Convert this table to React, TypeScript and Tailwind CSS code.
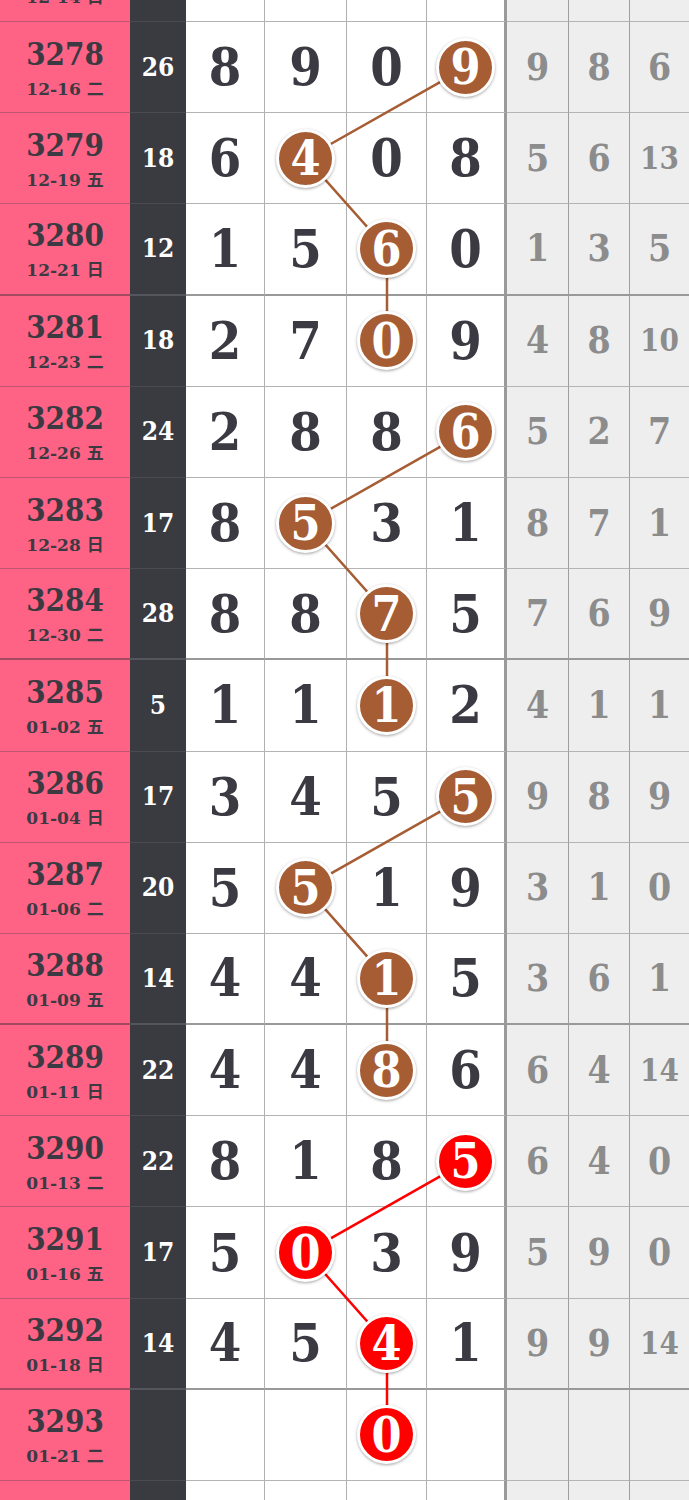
import React from "react";

type Row = {
  no: string;
  date: string;
  sum: string;
  d: string[];
  ball: number;
  red: boolean;
  g: string[];
};

const raw: [string, string, string, string, number, boolean, string][] = [
  ["", "12-14 日", "", "   ", -1, false, "  "],
  ["3278", "12-16 二", "26", "8 9 0 9", 3, false, "9 8 6"],
  ["3279", "12-19 五", "18", "6 4 0 8", 1, false, "5 6 13"],
  ["3280", "12-21 日", "12", "1 5 6 0", 2, false, "1 3 5"],
  ["3281", "12-23 二", "18", "2 7 0 9", 2, false, "4 8 10"],
  ["3282", "12-26 五", "24", "2 8 8 6", 3, false, "5 2 7"],
  ["3283", "12-28 日", "17", "8 5 3 1", 1, false, "8 7 1"],
  ["3284", "12-30 二", "28", "8 8 7 5", 2, false, "7 6 9"],
  ["3285", "01-02 五", "5", "1 1 1 2", 2, false, "4 1 1"],
  ["3286", "01-04 日", "17", "3 4 5 5", 3, false, "9 8 9"],
  ["3287", "01-06 二", "20", "5 5 1 9", 1, false, "3 1 0"],
  ["3288", "01-09 五", "14", "4 4 1 5", 2, false, "3 6 1"],
  ["3289", "01-11 日", "22", "4 4 8 6", 2, false, "6 4 14"],
  ["3290", "01-13 二", "22", "8 1 8 5", 3, true, "6 4 0"],
  ["3291", "01-16 五", "17", "5 0 3 9", 1, true, "5 9 0"],
  ["3292", "01-18 日", "14", "4 5 4 1", 2, true, "9 9 14"],
  ["3293", "01-21 二", "", "  0 ", 2, true, "  "],
  ["", "", "", "   ", -1, false, "  "],
];

const rows: Row[] = raw.map(([no, date, sum, d, ball, red, g]) => ({
  no,
  date,
  sum,
  d: d.split(" "),
  ball,
  red,
  g: g.split(" "),
}));

const R = 91.2;
const colCenters = [225.5, 306, 387, 467];
const serif = { fontFamily: '"DejaVu Serif", "Liberation Serif", serif', fontStretch: "condensed" as const };
const cjk = { fontFamily: '"DejaVu Serif", "Noto Sans CJK SC", serif' };

const digitWidths = ["w-[79px]", "w-[82px]", "w-[80px]", "w-[80px]"];
const grayWidths = ["w-[62px]", "w-[61px]", "w-[59px]"];

function Ball({ v, red }: { v: string; red: boolean }) {
  return (
    <span
      className={
        red
          ? "relative z-10 flex h-[59px] w-[59px] items-center justify-center rounded-full border-[3px] border-white bg-[#ff0000] text-[48px] font-bold leading-none text-white shadow-[0_1px_3px_rgba(0,0,0,0.35)]"
          : "relative z-10 flex h-[59px] w-[59px] items-center justify-center rounded-full border-[3px] border-white bg-[#a65d34] text-[48px] font-bold leading-none text-white shadow-[0_1px_3px_rgba(0,0,0,0.35)]"
      }
    >
      {v}
    </span>
  );
}

function TableRow({ r, i }: { r: Row; i: number }) {
  const thick = i % 4 === 3;
  const pinkB = thick ? "border-b-2 border-[#a34a60]" : "border-b border-[#c45570]";
  const darkB = thick ? "border-b-2 border-[#55555d]" : "border-b border-[#4a4a52]";
  const cellB = thick ? "border-b-2 border-[#999999]" : "border-b border-[#b4b4b4]";
  return (
    <div className="flex h-[91.2px]">
      <div
        className={`flex w-[130px] flex-col items-center justify-center gap-[6px] bg-[#fe6386] pt-[1px] text-[#3b3a42] ${pinkB}`}
      >
        <div className="h-[36px] text-[31px] font-bold leading-[36px]" style={serif}>
          {r.no}
        </div>
        <div className="text-[17px] font-bold leading-[22px]" style={cjk}>
          {r.date}
        </div>
      </div>
      <div
        className={`flex w-[56px] items-center justify-center bg-[#3a3a41] text-[26px] font-bold text-white ${darkB}`}
        style={serif}
      >
        {r.sum}
      </div>
      {r.d.map((v, k) => (
        <div
          key={k}
          className={`flex ${digitWidths[k]} items-center justify-center bg-white text-[52px] font-bold leading-none text-[#3b3a42] ${cellB} ${
            k === 3 ? "border-r-[3px] border-r-[#9a9a9a]" : "border-r border-r-[#b0b0b0]"
          }`}
          style={serif}
        >
          {r.ball === k ? <Ball v={v} red={r.red} /> : v}
        </div>
      ))}
      {r.g.map((v, k) => (
        <div
          key={k}
          className={`flex ${grayWidths[k]} items-center justify-center bg-[#eeeeee] font-bold leading-none text-[#8c8c8c] ${cellB} ${
            k < 2 ? "border-r border-r-[#9e9e9e]" : ""
          } ${v.length > 1 ? "text-[31px]" : "text-[37px]"}`}
          style={serif}
        >
          {v}
        </div>
      ))}
    </div>
  );
}

export default function App() {
  const groups: { pts: [number, number][]; red: boolean }[] = [];
  for (let s = 1; s + 3 < rows.length; s += 4) {
    const pts: [number, number][] = [];
    for (let j = s; j < s + 4; j++) {
      const r = rows[j];
      if (r.ball >= 0) pts.push([colCenters[r.ball], j * R + R / 2 - 1]);
    }
    groups.push({ pts, red: rows[s].red });
  }
  return (
    <div className="h-[1500px] w-[689px] overflow-hidden bg-white">
      <div className="relative mt-[-69.2px]">
        <svg
          className="pointer-events-none absolute left-0 top-0"
          width={689}
          height={rows.length * R}
        >
          {groups.map((g, gi) => (
            <polyline
              key={gi}
              points={g.pts.map((p) => p.join(",")).join(" ")}
              fill="none"
              stroke={g.red ? "#ff0000" : "#a65d34"}
              strokeWidth={2.5}
            />
          ))}
        </svg>
        {rows.map((r, i) => (
          <TableRow key={i} r={r} i={i} />
        ))}
      </div>
    </div>
  );
}
